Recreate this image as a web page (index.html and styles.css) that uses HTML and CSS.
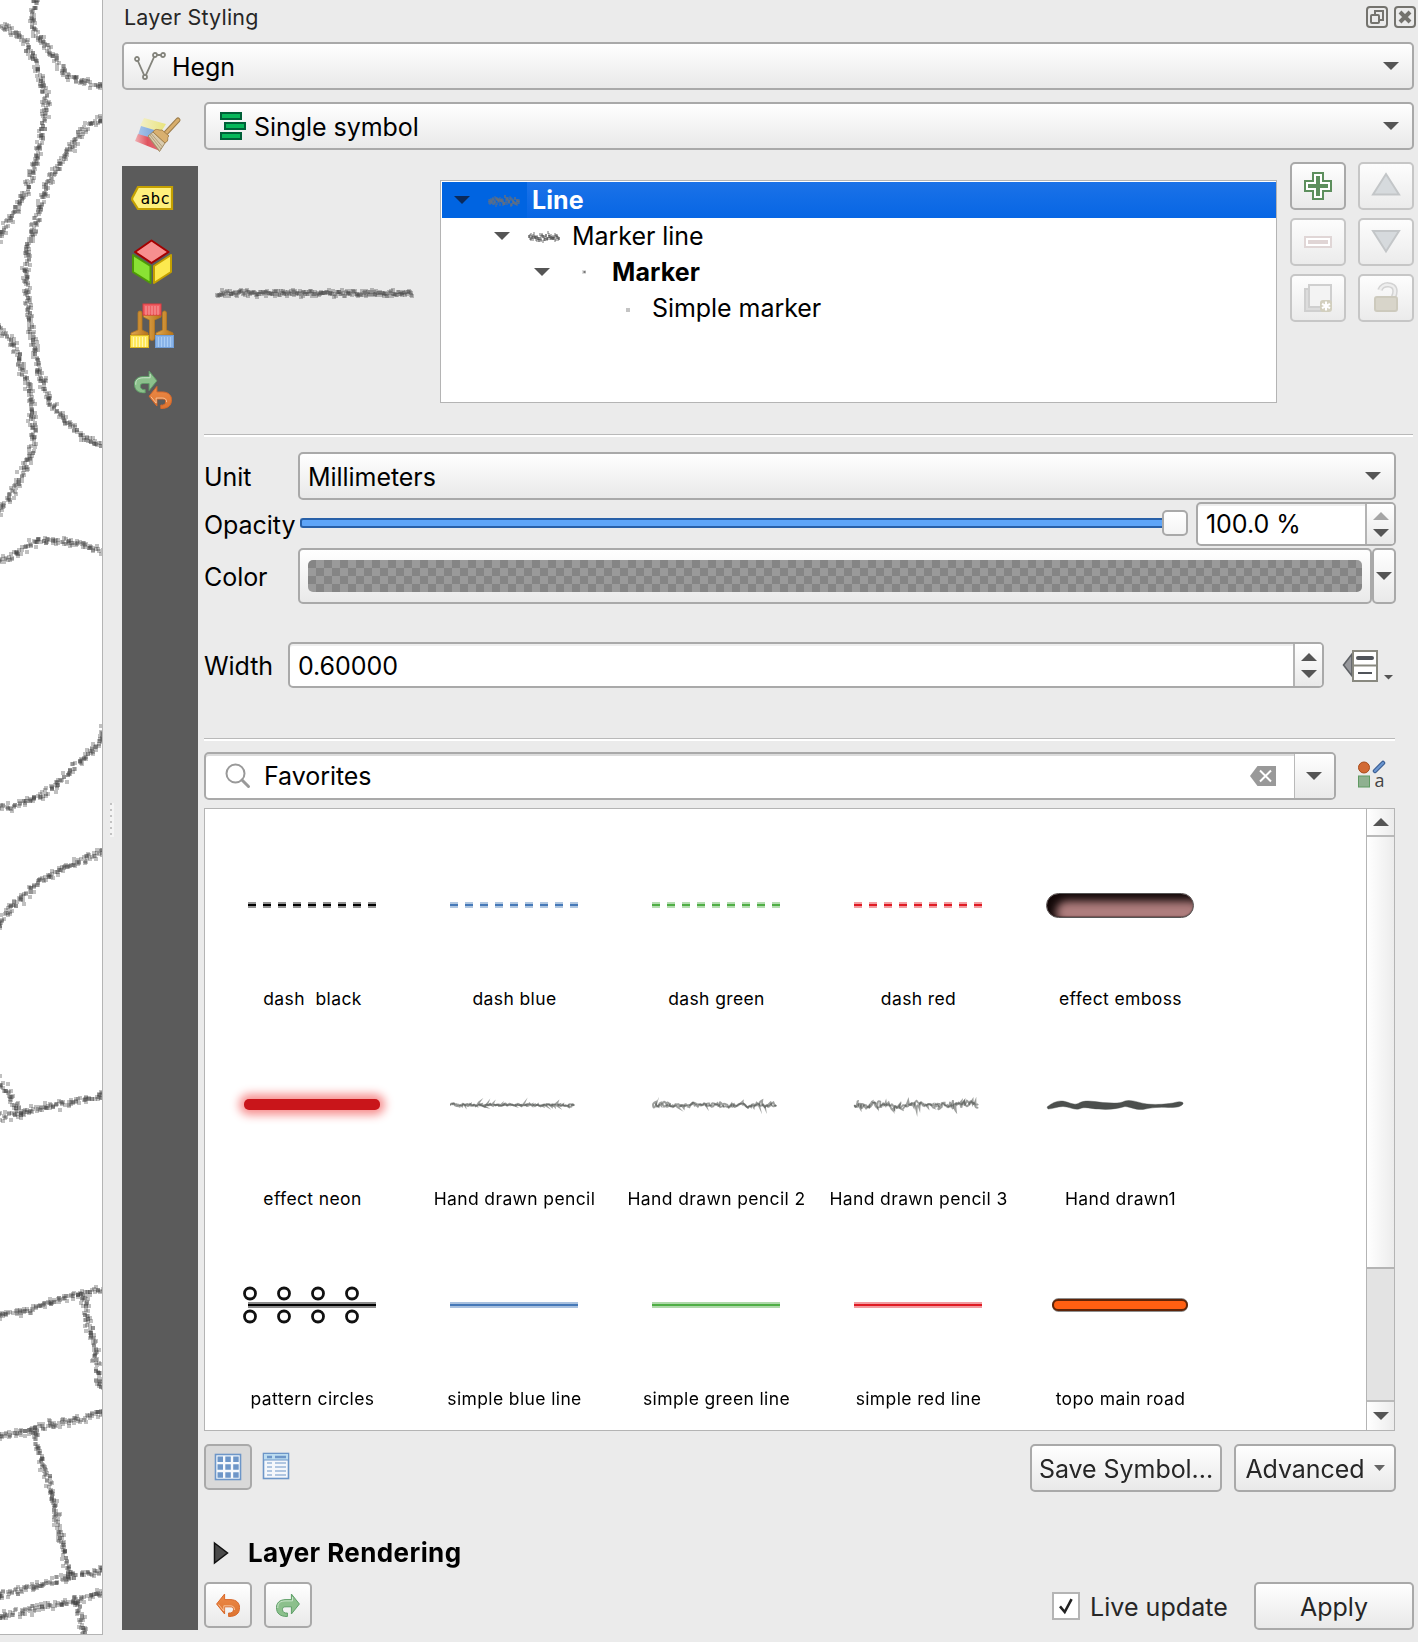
FILE: index.html
```html
<!DOCTYPE html>
<html lang="en">
<head>
<meta charset="utf-8">
<title>Layer Styling</title>
<link rel="stylesheet" href="styles.css">
</head>
<body>
<svg width="0" height="0" class="defs">
  <defs>
    <linearGradient id="orange" x1="0" y1="0" x2="0" y2="1"><stop offset="0" stop-color="#ec8a48"/><stop offset="1" stop-color="#dd7430"/></linearGradient>
    <linearGradient id="wood" x1="0" y1="0" x2="1" y2="0"><stop offset="0" stop-color="#e0a850"/><stop offset="1" stop-color="#b87418"/></linearGradient>
    <linearGradient id="fadeY" x1="0" y1="0" x2="1" y2="0"><stop offset="0" stop-color="#f3efc8"/><stop offset="1" stop-color="#e9e47c"/></linearGradient>
    <linearGradient id="fadeB" x1="0" y1="0" x2="1" y2="0"><stop offset="0" stop-color="#a8c4e8"/><stop offset="1" stop-color="#6a9bd8"/></linearGradient>
    <linearGradient id="fadeR" x1="0" y1="0" x2="1" y2="0"><stop offset="0" stop-color="#f0b0b4"/><stop offset=".5" stop-color="#e05560"/><stop offset="1" stop-color="#e06a72"/></linearGradient>
    <symbol id="down" viewBox="0 0 16 8"><path d="M0 0H16L8 8Z" fill="currentColor"/></symbol>
    <symbol id="up" viewBox="0 0 16 8"><path d="M0 8H16L8 0Z" fill="currentColor"/></symbol>
    <symbol id="undo" viewBox="0 0 24 24"><path d="M.6 11 8.6 1V6.6H14C21 6.6 23.5 10.500 23.500 14.500C23.500 20.500 20 23.500 12.600 23.500V20C15.500 20.500 17.500 19 17.500 16.500C17.500 14.500 16.500 13.800 14 13.800H8.600V21Z" fill="url(#orange)" stroke="#d9682a"/><path d="M2.500 11.500 7.800 18V12.800H14C17 12.800 18.500 14 18.500 17" fill="none" stroke="#f8c8a0" stroke-width=".9"/></symbol>
    <symbol id="redo" viewBox="0 0 24 24"><path d="M23.400 11 15.400 1V6.600H10C3 6.600.5 10.500.5 14.500C.5 20.500 4 23.500 11.400 23.500V20C8.500 20.500 6.500 19 6.500 16.500C6.500 14.500 7.500 13.800 10 13.800H15.400V21Z" fill="#8cc08c" stroke="#5f9f68"/><path d="M1.800 15C1.500 10 4 8 10 7.900H16.500V4" fill="none" stroke="#cfe8cf" stroke-width=".9"/></symbol>
  </defs>
</svg>

<main class="window">
  <section class="map"><canvas id="map" width="102" height="1634"></canvas></section>
  <div class="gutter"><div class="grip"></div></div>

  <section class="panel">
    <header class="title">
      <h1>Layer Styling</h1>
      <svg class="dock" width="50" height="22" viewBox="0 0 50 22" fill="none" stroke="#74736e" stroke-width="2">
        <rect x="1" y="1" width="20" height="20" rx="3"/><rect x="5" y="9" width="8" height="8" rx="1"/><path d="M9 8V5H17V14H14"/>
        <rect x="29" y="1" width="20" height="20" rx="3"/><path d="M34 6 44 16M44 6 34 16" stroke-width="4"/>
      </svg>
    </header>

    <div class="combo layer">
      <svg width="32" height="28" viewBox="0 0 32 28" fill="#fff" stroke="#84847c" stroke-width="1.800"><path d="M3 7 11 25 21 3H29" fill="none"/><circle cx="3" cy="7" r="2"/><circle cx="11" cy="25" r="2"/><circle cx="21" cy="3" r="2"/><circle cx="29" cy="3" r="2"/></svg>
      <span>Hegn</span><svg class="arrow"><use href="#down"/></svg>
    </div>

    <div class="body">
      <nav class="tabs">
        <div class="tab active"><svg viewBox="0 0 48 48">
          <path d="M16 8 38 14 33 22 12 16Z" fill="url(#fadeY)"/><path d="M13 16 33 22 28 32 10 25Z" fill="url(#fadeB)"/><path d="M10 24 24 28 32 41 7 31Z" fill="url(#fadeR)"/>
          <path d="M37 24 50 10" stroke="#9c7d4c" stroke-width="5" stroke-linecap="round"/><path d="M37 24 50 10" stroke="#d8ae6c" stroke-width="3" stroke-linecap="round"/>
          <path d="M20 26 25 22 37 33 31.500 41.500Z" fill="#d9cbad" stroke="#a08a62"/><path d="M22 25 33 39M23.500 24 34.500 37M21 27 31 40" stroke="#a8946e" stroke-width=".8"/>
          <path d="M25 22C28 17 31 21 34 20L41 26C38 28 42 30 37 33Z" fill="#d9b06f" stroke="#a5824d"/>
        </svg></div>
        <div class="tab"><svg viewBox="0 0 48 48"><path d="M4.200 24 10 13H44V35H10L4.200 26Z" fill="#fff07c" stroke="#c4a000" stroke-width="2.200"/><text x="12.500" y="30" class="abc">abc</text></svg></div>
        <div class="tab"><svg viewBox="0 0 48 48" stroke-width="2" stroke-linejoin="round">
          <path d="M23.500 2.500 40.500 14 23.500 25 7 14Z" fill="#f78f8f" stroke="#a40000"/>
          <path d="M5 17 22.500 28V45L5 34Z" fill="#8ae234" stroke="#4e9a06"/><path d="M43 17 26 28V45L43 34Z" fill="#fce94f" stroke="#c4a000"/></svg></div>
        <div class="tab"><svg viewBox="0 0 48 48">
          <g fill="url(#wood)" stroke="#b87820" stroke-width=".8"><path d="M10 11Q10 9 12 9Q14 9 14 11V28L20 31V33H3V31L10 28Z"/><path d="M34.500 11Q34.500 9 36.500 9Q38.500 9 38.500 11V28L45 31V33H28V31L34.500 28Z"/><path d="M15.500 13H33V15L26.500 18V36Q26.500 38.500 24 38.500Q21.500 38.500 21.500 36V18L15.500 15Z"/></g>
          <rect x="15" y="2" width="18" height="11" fill="#f06065" stroke="#e03a40"/><path d="M18 4V13M21 4V13M24 4V13M27 4V13M30 4V13" stroke="#f8a0a0"/>
          <rect x="2.500" y="33.500" width="18" height="12" fill="#ffe95c" stroke="#dcb820"/><path d="M5.500 35V45M8.500 35V45M11.500 35V45M14.500 35V45M17.500 35V45" stroke="#fff7ae"/>
          <rect x="27.500" y="33.500" width="18" height="12" fill="#8ab4e8" stroke="#6f9dd8"/><path d="M30.500 35V45M33.500 35V45M36.500 35V45M39.500 35V45M42.500 35V45" stroke="#a9ccf4"/></svg></div>
        <div class="tab"><svg viewBox="0 0 48 48"><use href="#redo" x="6" y="4" width="23.500" height="23.500"/><use href="#undo" x="20.500" y="19.500" width="23.500" height="23.500"/></svg></div>
      </nav>

      <div class="content">
        <div class="combo renderer">
          <svg width="26" height="28" viewBox="0 0 26 28" fill="#07b75a" stroke="#006038" stroke-width="2"><path d="M1 1H21V7H1ZM5 11H25V17H5ZM1 21H21V27H1Z"/></svg>
          <span>Single symbol</span><svg class="arrow"><use href="#down"/></svg>
        </div>

        <div class="symbol">
          <div class="preview"><canvas id="preview" width="208" height="24"></canvas></div>
          <ul class="tree">
            <li class="row selected"><svg class="arrow"><use href="#down"/></svg><canvas class="mini" width="32" height="14"></canvas><b>Line</b></li>
            <li class="row l2"><svg class="arrow"><use href="#down"/></svg><canvas class="mini" width="32" height="14"></canvas><span>Marker line</span></li>
            <li class="row l3"><svg class="arrow"><use href="#down"/></svg><svg class="mark" viewBox="0 0 32 14"><path d="M14 5H18V9H14Z" fill="#ddd"/><path d="M15.500 6H17.500V8H15.500Z" fill="#777"/></svg><b>Marker</b></li>
            <li class="row l4"><svg class="mark" viewBox="0 0 32 14"><path d="M18 7H22V11H18Z" fill="#c4c4c4"/></svg><span>Simple marker</span></li>
          </ul>
          <div class="tools">
            <button class="btn"><svg viewBox="0 0 28 28" fill="#fff" stroke="#5d8f5d" stroke-width="2"><path d="M9 1H19V9H27V19H19V27H9V19H1V9H9Z"/><path d="M14 4V24M4 14H24" stroke-width="4"/></svg></button>
            <button class="btn off"><svg viewBox="0 0 28 28"><path d="M1 22.500 14 2 27 22.500Z" fill="#d6dadd" stroke="#c3c6c8" stroke-width="2"/></svg></button>
            <button class="btn off"><svg viewBox="0 0 28 28"><rect x="1" y="9" width="26" height="10" fill="#fff" stroke="#e0d6d6" stroke-width="2"/><rect x="4" y="12" width="20" height="4" fill="#e0d5d5"/></svg></button>
            <button class="btn off"><svg viewBox="0 0 28 28"><path d="M1 3H27L14 23.500Z" fill="#d6dadd" stroke="#c3c6c8" stroke-width="2"/></svg></button>
            <button class="btn off"><svg viewBox="0 0 28 28" stroke="#cfcfcf" stroke-width="2"><path d="M1 5H21V27H1Z" fill="#dcdcdc"/><path d="M5 1H27V23H5Z" fill="#f3f3f3"/><rect x="17" y="17" width="10" height="10" rx="2" fill="#d6d3c2" stroke="#d2cfbe"/><path d="M22 17.500V26.500M18 19.800 26 24.200M26 19.800 18 24.200" stroke="#fff"/></svg></button>
            <button class="btn off"><svg viewBox="0 0 28 28"><path d="M8 6C10-1 23-1 23 7C23 11 22 12 21 14" fill="none" stroke="#d3d3d3" stroke-width="5.500"/><path d="M8 6C10-1 23-1 23 7C23 11 22 12 21 14" fill="none" stroke="#eee" stroke-width="2.500"/><rect x="3" y="13" width="22" height="14" rx="2" fill="#d8d5ca" stroke="#cdcabd" stroke-width="2"/></svg></button>
          </div>
        </div>
        <hr>

        <div class="settings">
          <div class="field unit"><label>Unit</label><div class="combo"><span>Millimeters</span><svg class="arrow"><use href="#down"/></svg></div></div>
          <div class="field opacity"><label>Opacity</label>
            <div class="slider"><div class="track"></div><div class="thumb"></div></div>
            <div class="spin"><span>100.0 %</span><div class="steps"><svg class="arrow faint"><use href="#up"/></svg><svg class="arrow"><use href="#down"/></svg></div></div>
          </div>
          <div class="field color"><label>Color</label><div class="swatch"><div class="checks"></div></div><div class="split"><svg class="arrow"><use href="#down"/></svg></div></div>
          <div class="field width"><label>Width</label>
            <div class="spin"><span>0.60000</span><div class="steps"><svg class="arrow"><use href="#up"/></svg><svg class="arrow"><use href="#down"/></svg></div></div>
            <svg class="override" width="52" height="34" viewBox="0 0 52 34"><path d="M10 5 1.500 16 10 27Z" fill="#97989c" stroke="#5d6064" stroke-width="1.600"/><rect x="11" y="2" width="24" height="30" fill="#fff" stroke="#88887f" stroke-width="2"/><path d="M11 16.500H35" stroke="#88887f" stroke-width="2"/><path d="M16 9H30" stroke="#50545a" stroke-width="4" stroke-linecap="round"/><path d="M16 24H30" stroke="#50545a" stroke-width="2"/><path d="M42 26H51L46.500 30.500Z" fill="#555"/></svg>
          </div>
          <hr>

          <div class="finder">
            <div class="search">
              <svg width="26" height="26" viewBox="0 0 26 26" fill="none" stroke="#999"><circle cx="10.500" cy="10.500" r="9" stroke-width="2"/><path d="M17 17 23.500 23.500" stroke-width="3" stroke-linecap="round"/></svg>
              <span>Favorites</span>
              <svg class="clear" width="26" height="20" viewBox="0 0 26 20"><path d="M0 10 7.500 0H26V20H7.500Z" fill="#999"/><path d="M10 4.500 21 15.500M21 4.500 10 15.500" stroke="#fff" stroke-width="2"/></svg>
              <div class="drop"><svg class="arrow"><use href="#down"/></svg></div>
            </div>
            <svg class="manager" width="28" height="28" viewBox="0 0 28 28"><circle cx="7" cy="6.500" r="5.500" fill="#d26a35" stroke="#a84c1c"/><path d="M18 10 26 2" stroke="#3c5f94" stroke-width="4.500" stroke-linecap="round"/><path d="M18 10 26 2" stroke="#6b96d0" stroke-width="2.200" stroke-linecap="round"/><rect x="1.500" y="15" width="11" height="11" fill="#8fb090" stroke="#5f9a62"/><text x="17.500" y="25.500" class="glyph-a">a</text></svg>
          </div>

          <div class="list">
            <div class="items">
              <figure><svg viewBox="0 0 202 60"><path d="M37 30H165" class="dash halo" stroke="#000"/><path d="M37 30H165" class="dash" stroke="#000"/></svg><figcaption>dash&nbsp; black</figcaption></figure>
              <figure><svg viewBox="0 0 202 60"><path d="M37 30H165" class="dash halo" stroke="#4679b8"/><path d="M37 30H165" class="dash" stroke="#4679b8"/></svg><figcaption>dash blue</figcaption></figure>
              <figure><svg viewBox="0 0 202 60"><path d="M37 30H165" class="dash halo" stroke="#4fae45"/><path d="M37 30H165" class="dash" stroke="#4fae45"/></svg><figcaption>dash green</figcaption></figure>
              <figure><svg viewBox="0 0 202 60"><path d="M37 30H165" class="dash halo" stroke="#e01b24"/><path d="M37 30H165" class="dash" stroke="#e01b24"/></svg><figcaption>dash red</figcaption></figure>
              <figure><div class="art"><div class="emboss"></div></div><figcaption>effect emboss</figcaption></figure>
              <figure><div class="art"><div class="neon"></div></div><figcaption>effect neon</figcaption></figure>
              <figure><canvas class="pencil" width="202" height="60" data-amp="3"></canvas><figcaption>Hand drawn pencil</figcaption></figure>
              <figure><canvas class="pencil" width="202" height="60" data-amp="5"></canvas><figcaption>Hand drawn pencil 2</figcaption></figure>
              <figure><canvas class="pencil" width="202" height="60" data-amp="7"></canvas><figcaption>Hand drawn pencil 3</figcaption></figure>
              <figure><svg viewBox="0 0 202 60"><path d="M28 32C34 27 40 25 46 26.500C52 28 56 31 61 27.500C68 24.500 76 27 84 27.500C92 28 100 29 106 26C112 24 120 28 128 29C138 30 150 29 156 27.500C161 26 165 27 164 29C161 32.500 156 32.500 149 32.500C140 32 132 32.500 124 34.500C116 35 112 32 106 31.500C98 34 88 35 80 34C72 34 66 31 60 34C54 35 50 31.500 44 31.500C38 31.500 34 34 29 34Z" fill="#4c4f4d" stroke="#4c4f4d" stroke-opacity=".4"/></svg><figcaption>Hand drawn1</figcaption></figure>
              <figure><svg viewBox="0 0 202 60"><path d="M37 30H165" stroke="#8c8c8c" stroke-width="6"/><path d="M37 30H165" stroke="#000" stroke-width="2"/><g class="rings"><circle cx="39" cy="18.500" r="5.500"/><circle cx="73" cy="18.500" r="5.500"/><circle cx="107" cy="18.500" r="5.500"/><circle cx="141" cy="18.500" r="5.500"/><circle cx="39" cy="41.500" r="5.500"/><circle cx="73" cy="41.500" r="5.500"/><circle cx="107" cy="41.500" r="5.500"/><circle cx="141" cy="41.500" r="5.500"/></g></svg><figcaption>pattern circles</figcaption></figure>
              <figure><svg viewBox="0 0 202 60"><path d="M37 30H165" stroke="#a9c1df" stroke-width="6"/><path d="M37 30H165" stroke="#4679b8" stroke-width="2"/></svg><figcaption>simple blue line</figcaption></figure>
              <figure><svg viewBox="0 0 202 60"><path d="M37 30H165" stroke="#afd9aa" stroke-width="6"/><path d="M37 30H165" stroke="#4fae45" stroke-width="2"/></svg><figcaption>simple green line</figcaption></figure>
              <figure><svg viewBox="0 0 202 60"><path d="M37 30H165" stroke="#f29ca1" stroke-width="6"/><path d="M37 30H165" stroke="#e01b24" stroke-width="2"/></svg><figcaption>simple red line</figcaption></figure>
              <figure><svg viewBox="0 0 202 60"><rect x="33" y="23" width="136" height="14" rx="6.500" fill="#8f8f8f"/><rect x="34" y="25" width="134" height="10" rx="5" fill="#ff5f12" stroke="#5e2408" stroke-width="2"/></svg><figcaption>topo main road</figcaption></figure>
            </div>
            <div class="scroll"><div class="cap top"><svg class="arrow"><use href="#up"/></svg></div><div class="handle"></div><div class="trough"></div><div class="cap"><svg class="arrow"><use href="#down"/></svg></div></div>
          </div>

          <div class="actions">
            <button class="btn view"><svg viewBox="0 0 28 28"><rect x="1.500" y="1.500" width="25" height="25" fill="#f6f9fc" stroke="#6d96c8" stroke-width="1.600"/><path d="M3.500 3.500h5.500v5.500h-5.500zM11.300 3.500h5.500v5.500h-5.500zM19.200 3.500h5.500v5.500h-5.500zM3.500 11.300h5.500v5.500h-5.500zM11.300 11.300h5.500v5.500h-5.500zM19.200 11.300h5.500v5.500h-5.500zM3.500 19.200h5.500v5.500h-5.500zM11.300 19.200h5.500v5.500h-5.500zM19.200 19.200h5.500v5.500h-5.500z" fill="#6d96c8"/></svg></button>
            <svg class="details" viewBox="0 0 28 28"><rect x="1.500" y="1.500" width="25" height="25" fill="#f4f7fb" stroke="#6d96c8" stroke-width="1.600"/><path d="M2 2H26V8H2Z" fill="#bcdcf0"/><path d="M2 8H26" stroke="#6d96c8"/><path d="M5 5H10M13 5H24" stroke="#6d96c8" stroke-width="2.600"/><path d="M5 11H10M13 11H24M5 15H10M13 15H24M5 19H10M13 19H24M5 23H10M13 23H24" stroke="#6d96c8" stroke-width="1.200"/></svg>
            <button class="btn save">Save Symbol...</button>
            <button class="btn advanced"><span>Advanced</span><svg width="11" height="6" viewBox="0 0 11 6"><path d="M0 0H11L5.500 6Z" fill="#666"/></svg></button>
          </div>
        </div>

        <div class="rendering"><svg width="16" height="24" viewBox="0 0 16 24"><path d="M1.500 2 14.500 12 1.500 22Z" fill="#4a4a4a" stroke="#111" stroke-width="1.500"/></svg><b>Layer Rendering</b></div>

        <footer class="footer">
          <button class="btn hist"><svg><use href="#undo"/></svg></button>
          <button class="btn hist"><svg><use href="#redo"/></svg></button>
          <div class="check"><svg viewBox="0 0 28 28"><path d="M7 14.500 12.500 21 20.500 6" fill="none" stroke="#222" stroke-width="3"/></svg></div>
          <span class="live">Live update</span>
          <button class="btn apply">Apply</button>
        </footer>
      </div>
    </div>
  </section>
</main>
<script src="strokes.js"></script>
</body>
</html>
```
FILE: styles.css
```css
* { box-sizing: border-box; }
body { margin: 0; background: #ebebeb; color: #000; font: 25px/30px Inter, "Liberation Sans", sans-serif; letter-spacing: -.05px; }
svg, canvas { display: block; flex: none; overflow: visible; }
.defs { position: absolute; }
b { font-weight: 700; }
button { padding: 0; font: inherit; letter-spacing: inherit; color: #262626; }
span, label, b { white-space: nowrap; }

.window { display: flex; width: 1418px; height: 1642px; overflow: hidden; }
.map { width: 103px; height: 1635px; background: #fff; border-right: 1px solid #b4b4b4; border-bottom: 1px solid #b4b4b4; overflow: hidden; }
.gutter { width: 19px; padding: 803px 0 0 7px; }
.grip { width: 4px; height: 34px; background: repeating-linear-gradient(#c2c2c2 0 2px, #f4f4f4 2px 6px); border-right: 2px solid #f4f4f4; }

.panel { width: 1292px; }
.title { display: flex; justify-content: space-between; height: 42px; padding: 6px 0 0 2px; margin-right: -2px; }
.title h1 { margin: -2px 0 0; font-size: 21.500px; line-height: 26px; font-weight: 400; letter-spacing: .2px; color: #262626; }

.arrow { width: 16px; height: 8px; color: #555; }
.arrow.faint { color: #a5a5a5; }
.combo, .btn, .spin, .swatch, .split, .search { border: 2px solid #a9a9a9; border-radius: 5px; background: linear-gradient(#fff, #e9e9e9); }
.combo { display: flex; align-items: center; height: 48px; padding-right: 13px; }
.combo span { padding-top: 2px; }
.combo .arrow { margin: 0 0 1px auto; }
.layer { padding-left: 10px; gap: 6px; }
.renderer { padding-left: 14px; gap: 8px; }

.body { display: flex; gap: 6px; margin-top: 12px; height: 1528px; }
.tabs { width: 76px; background: #5b5b5b; }
.tab { height: 64px; padding: 8px 6px; }
.tab.active { background: #ebebeb; }
.tab svg { width: 48px; height: 48px; }
.abc { font: 16px "DejaVu Sans Mono", monospace; letter-spacing: .3px; }
.content { width: 1210px; }

hr { height: 3px; margin: 0 1px 0 0; border: 0; border-top: 1px solid #b9b9b9; background: #fff; }
.symbol { display: flex; height: 272px; margin-top: 12px; }
.preview { width: 236px; padding: 119px 0 0 10px; }
.tree { width: 837px; height: 223px; margin: 18px 13px 0 0; padding: 1px 0 0 1px; border: 1px solid #b4b4b4; background: #fff; list-style: none; }
.row { display: flex; align-items: center; height: 36px; padding-left: 12px; }
.row .arrow { margin-right: 18px; }
.row b, .row span { margin-left: 12px; }
.row b { letter-spacing: .1px; }
.row.selected { color: #fff; background: linear-gradient(to right, #0064e1 85px, transparent 85px), linear-gradient(#1b72e8, #0766e4); }
.row.selected .arrow { color: #0a2a5c; }
.row.l2 { padding-left: 52px; }
.row.l3 { padding-left: 92px; }
.row.l4 { padding-left: 166px; }
.mark { width: 32px; height: 14px; }
.tools { display: grid; grid-template-columns: 56px 56px; grid-auto-rows: 48px; gap: 8px 12px; height: 160px; }
.btn { display: flex; align-items: center; justify-content: center; }
.btn svg { width: 28px; height: 28px; }
.btn.off { border-color: #c6c6c6; background: linear-gradient(#fdfdfd, #ebebeb); }

.settings { width: 1192px; padding-top: 15px; }
.field { display: flex; align-items: center; }
.field label { padding-top: 2px; }
.unit label, .color label { width: 94px; }
.unit .combo { width: 1098px; padding-left: 8px; }
.opacity { height: 44px; margin-top: 2px; }
.opacity label { width: 96px; }
.slider { display: flex; align-items: center; width: 896px; padding-bottom: 2px; }
.track { width: 862px; height: 10px; border: 2px solid #2860a8; border-right: 0; border-radius: 3px 0 0 3px; background: #5ea5f8; }
.thumb { width: 26px; height: 26px; border: 2px solid #a9a9a9; border-radius: 5px; background: linear-gradient(#fff, #f4f4f4); }
.spin { display: flex; align-items: center; height: 44px; padding-left: 8px; background: #fff; box-shadow: inset 0 2px #eee; overflow: hidden; }
.opacity .spin { width: 200px; }
.steps { display: flex; flex-direction: column; align-items: center; justify-content: center; gap: 9px; width: 29px; height: 100%; margin-left: auto; border-left: 2px solid #b4b4b4; background: linear-gradient(#fff, #e9e9e9); }
.color { height: 56px; margin-top: 2px; }
.swatch { width: 1074px; height: 56px; padding: 10px 8px; }
.checks { height: 32px; border-radius: 5px; background: repeating-conic-gradient(#9a9a9a 0 25%, #858585 0 50%) 0 0 / 16px 16px; }
.split { display: flex; align-items: center; justify-content: center; width: 24px; height: 56px; }
.width { height: 46px; margin: 38px 0 50px; }
.width label { width: 84px; }
.width .spin { width: 1036px; height: 46px; }
.width .spin span { padding-top: 1px; }
.override { margin: 1px 0 0 18px; }

.finder { display: flex; align-items: center; margin-top: 11px; }
.search { display: flex; align-items: center; width: 1132px; height: 48px; padding-left: 19px; background: #fff; box-shadow: inset 0 2px #dcdcdc; overflow: hidden; }
.search span { margin-left: 13px; }
.clear { margin-left: auto; }
.drop { display: flex; align-items: center; justify-content: center; width: 40px; height: 100%; margin-left: 18px; padding-right: 2px; border-left: 1px solid #b9b9b9; background: linear-gradient(#fff, #e9e9e9); }
.manager { margin: -2px 0 0 21px; }
.glyph-a { font: 18px "Open Sans", sans-serif; fill: #444; }

.list { display: flex; justify-content: space-between; width: 1191px; height: 623px; margin-top: 8px; border: 1px solid #b4b4b4; background: #fff; }
.items { display: grid; grid-template-columns: repeat(5, 202px); grid-auto-rows: 200px; padding: 66px 0 0 6px; }
figure { margin: 0; height: 200px; }
figure > svg, .art { width: 202px; height: 60px; }
figcaption { margin-top: 52px; padding-left: 1px; font-size: 17.500px; line-height: 24px; letter-spacing: .38px; text-align: center; white-space: nowrap; }
.dash { stroke-width: 2; stroke-dasharray: 8 7; }
.halo { stroke-width: 6; stroke-opacity: .42; }
.rings { fill: #fff; stroke: #111; stroke-width: 2.800; }
.art { display: flex; align-items: center; padding-left: 27px; }
.emboss { width: 148px; height: 25px; border: 1px solid #555; border-radius: 13px; background: #ae7d7d; box-shadow: inset 9px 7px 9px #120808, inset 0 -1px 1px #7a5555; }
.neon { width: 136px; height: 11px; margin: -1px 0 0 6px; border-radius: 5px; background: #c9151a; box-shadow: 0 0 10px 5px #f78f8f; }
.scroll { width: 28px; height: 621px; border-left: 1px solid #b4b4b4; background: #e3e3e3; }
.cap { display: flex; align-items: center; justify-content: center; height: 28px; background: linear-gradient(to right, #fff, #ececec); }
.cap.top { border-bottom: 2px solid #b9b9b9; }
.handle { height: 432px; border-bottom: 2px solid #b4b4b4; background: linear-gradient(to right, #fff, #ececec); }
.trough { height: 133px; border-bottom: 2px solid #b9b9b9; }

.actions { display: flex; margin-top: 13px; height: 48px; }
.view { width: 48px; height: 46px; background: #d9d9d9; }
.details { width: 28px; height: 28px; margin: 8px 0 0 10px; }
.save { width: 192px; margin-left: auto; padding-top: 2px; }
.advanced { width: 162px; margin-left: 12px; gap: 9px; }
.advanced span { padding-top: 2px; }
.advanced svg { width: 11px; height: 6px; }
.rendering { display: flex; align-items: center; height: 30px; margin: 46px 0 0 9px; gap: 19px; }
.rendering b { font-size: 26px; letter-spacing: .4px; }
.footer { display: flex; align-items: center; height: 48px; margin-top: 14px; }
.hist { width: 48px; height: 46px; margin: -2px 12px 0 0; }
.hist svg { width: 24px; height: 24px; }
.check { width: 28px; height: 28px; margin-left: 728px; border: 2px solid #b4b4b4; background: #fff; }
.check svg { width: 24px; height: 24px; }
.live { margin-left: 10px; padding-top: 2px; color: #262626; letter-spacing: .05px; }
.apply { width: 160px; height: 48px; margin-left: auto; padding-top: 2px; }
```
FILE: strokes.js
```js
let seed = 7;
function rnd() {
  seed = (seed * 1664525 + 1013904223) >>> 0;
  return seed / 4294967296;
}
function gauss() { return (rnd() + rnd() + rnd() - 1.5) / 1.5; }

// Catmull-Rom interpolation through the control points
function at(pts, i, t) {
  const p = k => pts[Math.max(0, Math.min(pts.length - 1, k))];
  return [0, 1].map(d => {
    const a = p(i - 1)[d], b = p(i)[d], c = p(i + 1)[d], e = p(i + 2)[d];
    return .5 * (2 * b + (c - a) * t + (2 * a - 5 * b + 4 * c - e) * t * t + (3 * b - a - 3 * c + e) * t * t * t);
  });
}

function scatter(ctx, pts, step, spread, w, h) {
  for (let i = 0; i < pts.length - 1; i++) {
    const len = Math.hypot(pts[i + 1][0] - pts[i][0], pts[i + 1][1] - pts[i][1]);
    for (let s = 0; s < len; s += step) {
      const [x, y] = at(pts, i, s / len);
      ctx.fillRect(Math.round(x + gauss() * spread - w / 2), Math.round(y + gauss() * spread - h / 2), w, h);
    }
  }
}

const lines = [
  [[38, -3], [32, 17], [39, 36], [50, 50], [66, 73], [84, 82], [104, 87]],
  [[-3, 22], [20, 38], [33, 56], [41, 78], [45, 103], [42, 135], [35, 165], [23, 197], [10, 219], [-3, 240]],
  [[104, 118], [83, 131], [69, 150], [54, 173], [44, 195], [37, 218], [29, 243], [26, 275], [29, 310], [34, 347], [42, 382], [50, 400], [63, 418], [82, 436], [104, 445]],
  [[-3, 325], [12, 343], [22, 367], [29, 392], [32, 415], [33, 438], [29, 459], [22, 475], [12, 492], [-3, 515]],
  [[-3, 562], [17, 553], [35, 542], [52, 540], [70, 543], [84, 544], [104, 553]],
  [[104, 730], [95, 746], [83, 759], [66, 776], [50, 791], [33, 799], [17, 805], [-3, 809]],
  [[104, 852], [83, 859], [62, 869], [43, 880], [20, 900], [7, 912], [-3, 928]],
  [[-3, 1117], [20, 1114], [40, 1108], [70, 1102], [104, 1096]],
  [[-3, 1078], [7, 1091], [15, 1105], [22, 1114]],
  [[-3, 1315], [20, 1312], [48, 1303], [83, 1294], [104, 1289]],
  [[83, 1294], [88, 1321], [95, 1350], [101, 1388]],
  [[-3, 1437], [33, 1429], [67, 1421], [104, 1411]],
  [[33, 1430], [42, 1460], [53, 1500], [61, 1538], [70, 1577]],
  [[-3, 1596], [33, 1587], [70, 1577], [104, 1569]],
  [[-3, 1617], [33, 1609], [77, 1600], [104, 1592]],
  [[76, 1600], [80, 1615], [85, 1635]]
];
const map = document.getElementById('map').getContext('2d');
map.fillStyle = 'rgba(60,60,60,.32)';
lines.forEach(l => scatter(map, l, 1.05, 5.8, 4, 4));

const prev = document.getElementById('preview').getContext('2d');
prev.fillStyle = 'rgba(64,64,64,.33)';
for (let x = 1; x < 197; x += .9) prev.fillRect(Math.round(x), Math.round(10 + gauss() * 5), 4, 4);

document.querySelectorAll('.mini').forEach((c, n) => {
  const g = c.getContext('2d');
  g.fillStyle = n ? 'rgba(64,64,64,.36)' : 'rgba(112,112,112,.4)';
  for (let x = 0; x < 30; x += .4) g.fillRect(Math.round(x), Math.round(6.5 + gauss() * 5.5), 2, 3);
});

document.querySelectorAll('.pencil').forEach(c => {
  const g = c.getContext('2d'), amp = +c.dataset.amp;
  g.strokeStyle = 'rgba(60,64,60,.5)';
  g.lineWidth = 1.9;
  for (let pass = 0; pass < 2; pass++) {
    g.beginPath();
    g.moveTo(38, 30);
    for (let x = 38; x < 161; x += 2.8) {
      g.quadraticCurveTo(x + gauss() * 3, 30 + gauss() * amp * 1.2, x + 2.8, 30 + gauss() * amp);
    }
    g.stroke();
  }
});
```
